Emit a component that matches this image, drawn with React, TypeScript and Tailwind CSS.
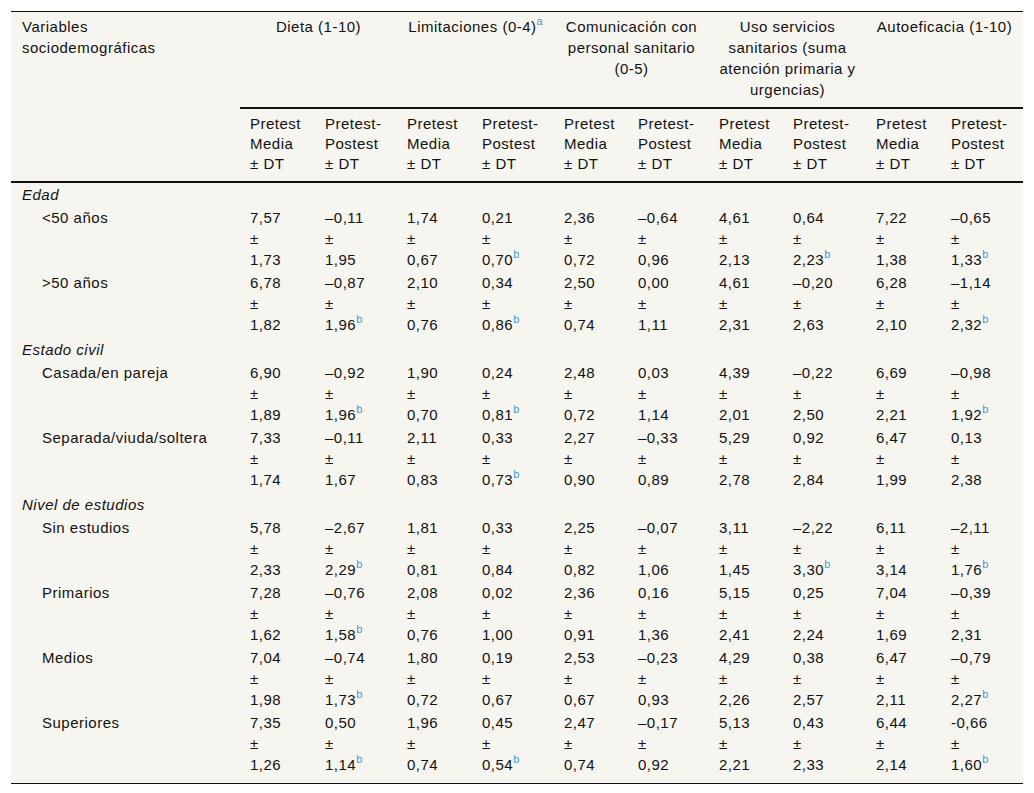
import React from "react";

type Cell = [string, string, boolean?];
type Row = { label: string; cells: Cell[] };
type Section = { title: string; rows: Row[] };

const sections: Section[] = [
  {
    title: "Edad",
    rows: [
      {
        label: "<50 años",
        cells: [
          ["7,57", "1,73"], ["–0,11", "1,95"], ["1,74", "0,67"], ["0,21", "0,70", true], ["2,36", "0,72"],
          ["–0,64", "0,96"], ["4,61", "2,13"], ["0,64", "2,23", true], ["7,22", "1,38"], ["–0,65", "1,33", true],
        ],
      },
      {
        label: ">50 años",
        cells: [
          ["6,78", "1,82"], ["–0,87", "1,96", true], ["2,10", "0,76"], ["0,34", "0,86", true], ["2,50", "0,74"],
          ["0,00", "1,11"], ["4,61", "2,31"], ["–0,20", "2,63"], ["6,28", "2,10"], ["–1,14", "2,32", true],
        ],
      },
    ],
  },
  {
    title: "Estado civil",
    rows: [
      {
        label: "Casada/en pareja",
        cells: [
          ["6,90", "1,89"], ["–0,92", "1,96", true], ["1,90", "0,70"], ["0,24", "0,81", true], ["2,48", "0,72"],
          ["0,03", "1,14"], ["4,39", "2,01"], ["–0,22", "2,50"], ["6,69", "2,21"], ["–0,98", "1,92", true],
        ],
      },
      {
        label: "Separada/viuda/soltera",
        cells: [
          ["7,33", "1,74"], ["–0,11", "1,67"], ["2,11", "0,83"], ["0,33", "0,73", true], ["2,27", "0,90"],
          ["–0,33", "0,89"], ["5,29", "2,78"], ["0,92", "2,84"], ["6,47", "1,99"], ["0,13", "2,38"],
        ],
      },
    ],
  },
  {
    title: "Nivel de estudios",
    rows: [
      {
        label: "Sin estudios",
        cells: [
          ["5,78", "2,33"], ["–2,67", "2,29", true], ["1,81", "0,81"], ["0,33", "0,84"], ["2,25", "0,82"],
          ["–0,07", "1,06"], ["3,11", "1,45"], ["–2,22", "3,30", true], ["6,11", "3,14"], ["–2,11", "1,76", true],
        ],
      },
      {
        label: "Primarios",
        cells: [
          ["7,28", "1,62"], ["–0,76", "1,58", true], ["2,08", "0,76"], ["0,02", "1,00"], ["2,36", "0,91"],
          ["0,16", "1,36"], ["5,15", "2,41"], ["0,25", "2,24"], ["7,04", "1,69"], ["–0,39", "2,31"],
        ],
      },
      {
        label: "Medios",
        cells: [
          ["7,04", "1,98"], ["–0,74", "1,73", true], ["1,80", "0,72"], ["0,19", "0,67"], ["2,53", "0,67"],
          ["–0,23", "0,93"], ["4,29", "2,26"], ["0,38", "2,57"], ["6,47", "2,11"], ["–0,79", "2,27", true],
        ],
      },
      {
        label: "Superiores",
        cells: [
          ["7,35", "1,26"], ["0,50", "1,14", true], ["1,96", "0,74"], ["0,45", "0,54", true], ["2,47", "0,74"],
          ["–0,17", "0,92"], ["5,13", "2,21"], ["0,43", "2,33"], ["6,44", "2,14"], ["-0,66", "1,60", true],
        ],
      },
    ],
  },
];

const colWidths = ["w-[229px]", "w-[75px]", "w-[82px]", "w-[75px]", "w-[82px]", "w-[74px]", "w-[81px]", "w-[74px]", "w-[83px]", "w-[75px]", "w-[82px]"];

const Sup = ({ children }: { children: React.ReactNode }) => (
  <sup className="text-[11px] tracking-normal text-[#3a9bd8] top-[-0.6em]">{children}</sup>
);

const groups = [
  <>Dieta (1-10)</>,
  <>
    Limitaciones (0-4)<Sup>a</Sup>
  </>,
  <>Comunicación con personal sanitario (0-5)</>,
  <>Uso servicios sanitarios (suma atención primaria y urgencias)</>,
  <>Autoeficacia (1-10)</>,
];

export default function App() {
  return (
    <div className="bg-white min-h-[793px] px-[11px] pt-[11px] font-['Liberation_Sans',Arial,sans-serif] text-[15px] tracking-[0.5px] text-[#111]">
      <table className="w-[1012px] table-fixed border-collapse bg-[#f7f5f0] leading-[21px]">
        <colgroup>
          {colWidths.map((w, i) => (
            <col key={i} className={w} />
          ))}
        </colgroup>
        <thead>
          <tr className="border-t border-[#111]">
            <th rowSpan={2} className="align-top text-left font-normal pl-[11px] pr-2 pt-[4px] border-b-2 border-[#111]">
              Variables
              <br />
              sociodemográficas
            </th>
            {groups.map((g, i) => (
              <th
                key={i}
                colSpan={2}
                className="align-top text-center font-normal px-[10px] pt-[4px] pb-[7px] border-b-2 border-[#111]"
              >
                {g}
              </th>
            ))}
          </tr>
          <tr className="border-b-2 border-[#111]">
            {Array.from({ length: 10 }).map((_, i) => (
              <th key={i} className="align-top text-left font-normal pl-[10px] pr-1 pt-[5px] pb-[7px] leading-[20px]">
                {i % 2 === 0 ? (
                  <>
                    Pretest
                    <br />
                    Media
                    <br />± DT
                  </>
                ) : (
                  <>
                    Pretest-
                    <br />
                    Postest
                    <br />± DT
                  </>
                )}
              </th>
            ))}
          </tr>
        </thead>
        {sections.map((s, si) => (
          <tbody key={s.title}>
            <tr>
              <td colSpan={11} className={`italic pl-[11px] pb-[1px] ${si === 0 ? "pt-[1px]" : "pt-[3px]"}`}>
                {s.title}
              </td>
            </tr>
            {s.rows.map((r, ri) => {
              const last = si === sections.length - 1 && ri === s.rows.length - 1;
              const pad = last ? "pt-[1px] pb-[8px]" : "py-[1px]";
              return (
                <tr key={r.label} className={last ? "border-b border-[#111]" : ""}>
                  <td className={`align-top pl-[31px] ${pad}`}>{r.label}</td>
                  {r.cells.map(([m, sd, sig], ci) => (
                    <td key={ci} className={`align-top pl-[10px] ${pad}`}>
                      {m}
                      <br />±
                      <br />
                      {sd}
                      {sig && <Sup>b</Sup>}
                    </td>
                  ))}
                </tr>
              );
            })}
          </tbody>
        ))}
      </table>
    </div>
  );
}
